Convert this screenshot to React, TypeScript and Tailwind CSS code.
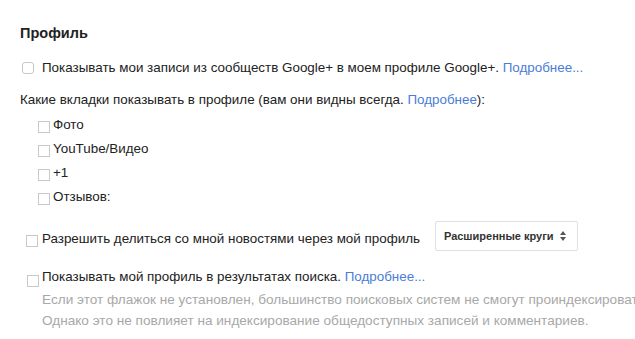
import React from "react";

function Box({ rounded = false }: { rounded?: boolean }) {
  return (
    <span
      className={
        "inline-block shrink-0 w-[12px] h-[12px] border border-[#c9c9c9] bg-white " +
        (rounded ? "rounded-[3px] bg-[#fafafa]" : "")
      }
    />
  );
}

const Link = ({ children }: { children: React.ReactNode }) => (
  <span className="text-[#4a7dd6]">{children}</span>
);

export default function App() {
  return (
    <div
      className="w-[635px] h-[339px] overflow-hidden bg-white text-[#222] text-[13.4px]"
      style={{ fontFamily: '"Liberation Sans", Arial, sans-serif' }}
    >
      <div className="pt-[24px]">
        <div className="pl-[20px] h-[18px] leading-[18px] text-[14.5px] font-bold text-[#222]">
          Профиль
        </div>

        <div className="mt-[17px] flex items-center h-[18px] pl-[22px]">
          <Box rounded />
          <span className="ml-[8px] leading-[18px] whitespace-nowrap">
            Показывать мои записи из сообществ Google+ в моем профиле Google+.{" "}
            <Link>Подробнее...</Link>
          </span>
        </div>

        <div className="mt-[14px] pl-[20px] h-[18px] leading-[18px] whitespace-nowrap">
          Какие вкладки показывать в профиле (вам они видны всегда. <Link>Подробнее</Link>):
        </div>

        <div className="mt-[4px] pl-[38px] flex flex-col">
          {["Фото", "YouTube/Видео", "+1", "Отзывов:"].map((t) => (
            <div key={t} className="h-[24px] flex items-center">
              <span className="mt-[3px] flex">
                <Box />
              </span>
              <span className="ml-[3px] leading-[18px]">{t}</span>
            </div>
          ))}
        </div>

        <div className="mt-[12px] flex items-center pl-[26px] h-[30px]">
          <span className="mt-[9px] flex">
            <Box />
          </span>
          <span className="ml-[4px] mt-[5px] leading-[18px] whitespace-nowrap">
            Разрешить делиться со мной новостями через мой профиль
          </span>
          <div className="ml-[15px] h-[30px] w-[143px] shrink-0 border border-[#e0e0e0] rounded-[2px] flex items-center pl-[8px] pr-[10px] justify-between">
            <span className="text-[11px] font-bold text-[#333] whitespace-nowrap">
              Расширенные круги
            </span>
            <svg width="8" height="12" viewBox="0 0 8 12">
              <path d="M4 1 L7 5 L1 5 Z" fill="#555" />
              <path d="M4 11 L7 7 L1 7 Z" fill="#555" />
            </svg>
          </div>
        </div>

        <div className="mt-[17px] flex items-center pl-[27px] h-[18px]">
          <span className="mt-[7px] flex">
            <Box />
          </span>
          <span className="ml-[3px] leading-[18px] whitespace-nowrap">
            Показывать мой профиль в результатах поиска. <Link>Подробнее...</Link>
          </span>
        </div>

        <div className="pl-[42px] mt-[3px] text-[13.6px] text-[#a8a8a8] leading-[21px] whitespace-nowrap">
          <div>
            Если этот флажок не установлен, большинство поисковых систем не смогут проиндексировать ваш профиль.
          </div>
          <div>Однако это не повлияет на индексирование общедоступных записей и комментариев.</div>
        </div>
      </div>
    </div>
  );
}
